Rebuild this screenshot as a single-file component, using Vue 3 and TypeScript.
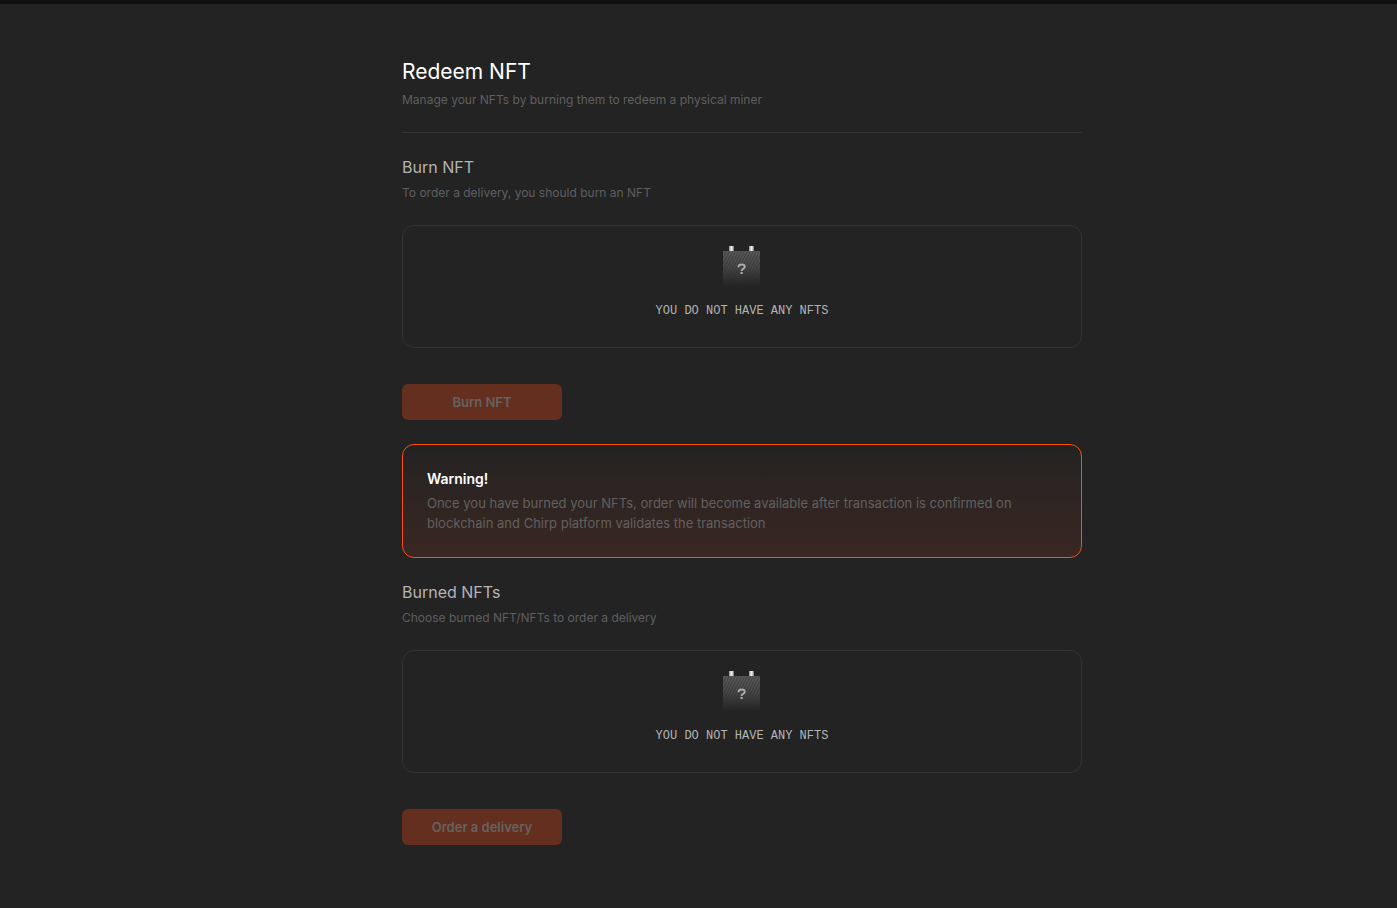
<script setup lang="ts">
interface Section {
  id: string
  title: string
  hint: string
  action: string
  warning?: { title: string; text: string }
}

const sections: Section[] = [
  {
    id: 'burn',
    title: 'Burn NFT',
    hint: 'To order a delivery, you should burn an NFT',
    action: 'Burn NFT',
    warning: {
      title: 'Warning!',
      text: 'Once you have burned your NFTs, order will become available after transaction is confirmed on blockchain and Chirp platform validates the transaction',
    },
  },
  {
    id: 'burned',
    title: 'Burned NFTs',
    hint: 'Choose burned NFT/NFTs to order a delivery',
    action: 'Order a delivery',
  },
]
</script>

<template>
  <div class="page">
    <main class="content">
      <header class="intro">
        <h1>Redeem NFT</h1>
        <p class="hint">Manage your NFTs by burning them to redeem a physical miner</p>
      </header>

      <section v-for="s in sections" :key="s.id" class="section" :aria-labelledby="`${s.id}-title`">
        <h2 :id="`${s.id}-title`">{{ s.title }}</h2>
        <p class="hint">{{ s.hint }}</p>

        <div class="empty">
          <svg class="miner" width="38" height="40" viewBox="0 0 38 40" aria-hidden="true">
            <defs>
              <linearGradient :id="`${s.id}-body`" x1="0" y1="0" x2="0" y2="1">
                <stop offset="0" stop-color="#5a5a5a" />
                <stop offset="0.5" stop-color="#444" />
                <stop offset="1" stop-color="#232323" />
              </linearGradient>
              <linearGradient :id="`${s.id}-pin`" x1="0" y1="0" x2="1" y2="0">
                <stop offset="0" stop-color="#8b8b8b" />
                <stop offset="0.45" stop-color="#f2f2f2" />
                <stop offset="0.65" stop-color="#dcdcdc" />
                <stop offset="1" stop-color="#666" />
              </linearGradient>
              <pattern :id="`${s.id}-lines`" width="3" height="6" patternUnits="userSpaceOnUse">
                <path d="M-3 6L0 0M0 6L3 0M3 6L6 0" stroke="#252525" stroke-width="0.8" stroke-opacity="0.6" />
              </pattern>
            </defs>
            <rect x="6" y="0" width="5" height="5" :fill="`url(#${s.id}-pin)`" />
            <rect x="26" y="0" width="5" height="5" :fill="`url(#${s.id}-pin)`" />
            <rect y="5" width="37" height="35" :fill="`url(#${s.id}-body)`" />
            <rect y="5" width="37" height="35" :fill="`url(#${s.id}-lines)`" />
            <path
              d="M15.4 21.2C15.4 19.2 16.6 18.5 18.6 18.5C20.6 18.5 21.8 19.3 21.8 20.8C21.8 22.8 18.6 22.4 18.6 25"
              fill="none"
              stroke="#acacac"
              stroke-width="1.9"
            />
            <rect x="17.5" y="26" width="2.2" height="2" fill="#acacac" />
          </svg>
          <p class="empty-text">YOU DO NOT HAVE ANY NFTS</p>
        </div>

        <button class="action" type="button" disabled>{{ s.action }}</button>

        <aside v-if="s.warning" class="warning">
          <h3>{{ s.warning.title }}</h3>
          <p>{{ s.warning.text }}</p>
        </aside>
      </section>
    </main>
  </div>
</template>

<style>
body {
  margin: 0;
  background: #232323;
}
</style>

<style scoped>
.page {
  box-sizing: border-box;
  min-height: 100vh;
  padding: 52px 0 60px 87px;
  border-top: 4px solid #111;
  background: #232323;
  font-family: Inter, 'Liberation Sans', sans-serif;
}

.content {
  max-width: 680px;
  margin: 0 auto;
}

h1,
h2,
h3,
p {
  margin: 0;
}

.intro {
  padding-bottom: 22px;
  border-bottom: 1px solid #333;
}

h1 {
  margin-bottom: 2px;
  color: #fff;
  font-size: 21px;
  font-weight: 400;
  line-height: 32px;
}

h2 {
  margin-bottom: 6px;
  color: #b4b4b4;
  font-size: 16px;
  font-weight: 400;
  line-height: 20px;
}

.hint {
  color: #5f5f5f;
  font-size: 12px;
  line-height: 20px;
}

.section {
  padding-top: 24px;
}

.empty {
  display: flex;
  flex-direction: column;
  align-items: center;
  gap: 16px;
  margin-top: 22px;
  padding: 20px 20px 26px;
  border: 1px solid #333;
  border-radius: 12px;
}

.miner {
  display: block;
}

.empty-text {
  color: #b4b4b4;
  font-family: 'Liberation Mono', monospace;
  font-size: 12px;
  line-height: 19px;
}

.action {
  display: block;
  width: 160px;
  height: 36px;
  margin-top: 36px;
  padding: 0;
  border: 0;
  border-radius: 6px;
  background: #642f1f;
  color: #666260;
  font-family: inherit;
  font-size: 13px;
  font-weight: 600;
}

.warning {
  margin-top: 24px;
  padding: 24px;
  border: 1px solid #ff4d14;
  border-radius: 12px;
  background: linear-gradient(180deg, #232323, #3a2722);
}

h3 {
  margin-bottom: 4px;
  color: #fff;
  font-size: 14px;
  font-weight: 600;
  line-height: 20px;
}

.warning p {
  color: #62605f;
  font-size: 13px;
  line-height: 20px;
}
</style>
